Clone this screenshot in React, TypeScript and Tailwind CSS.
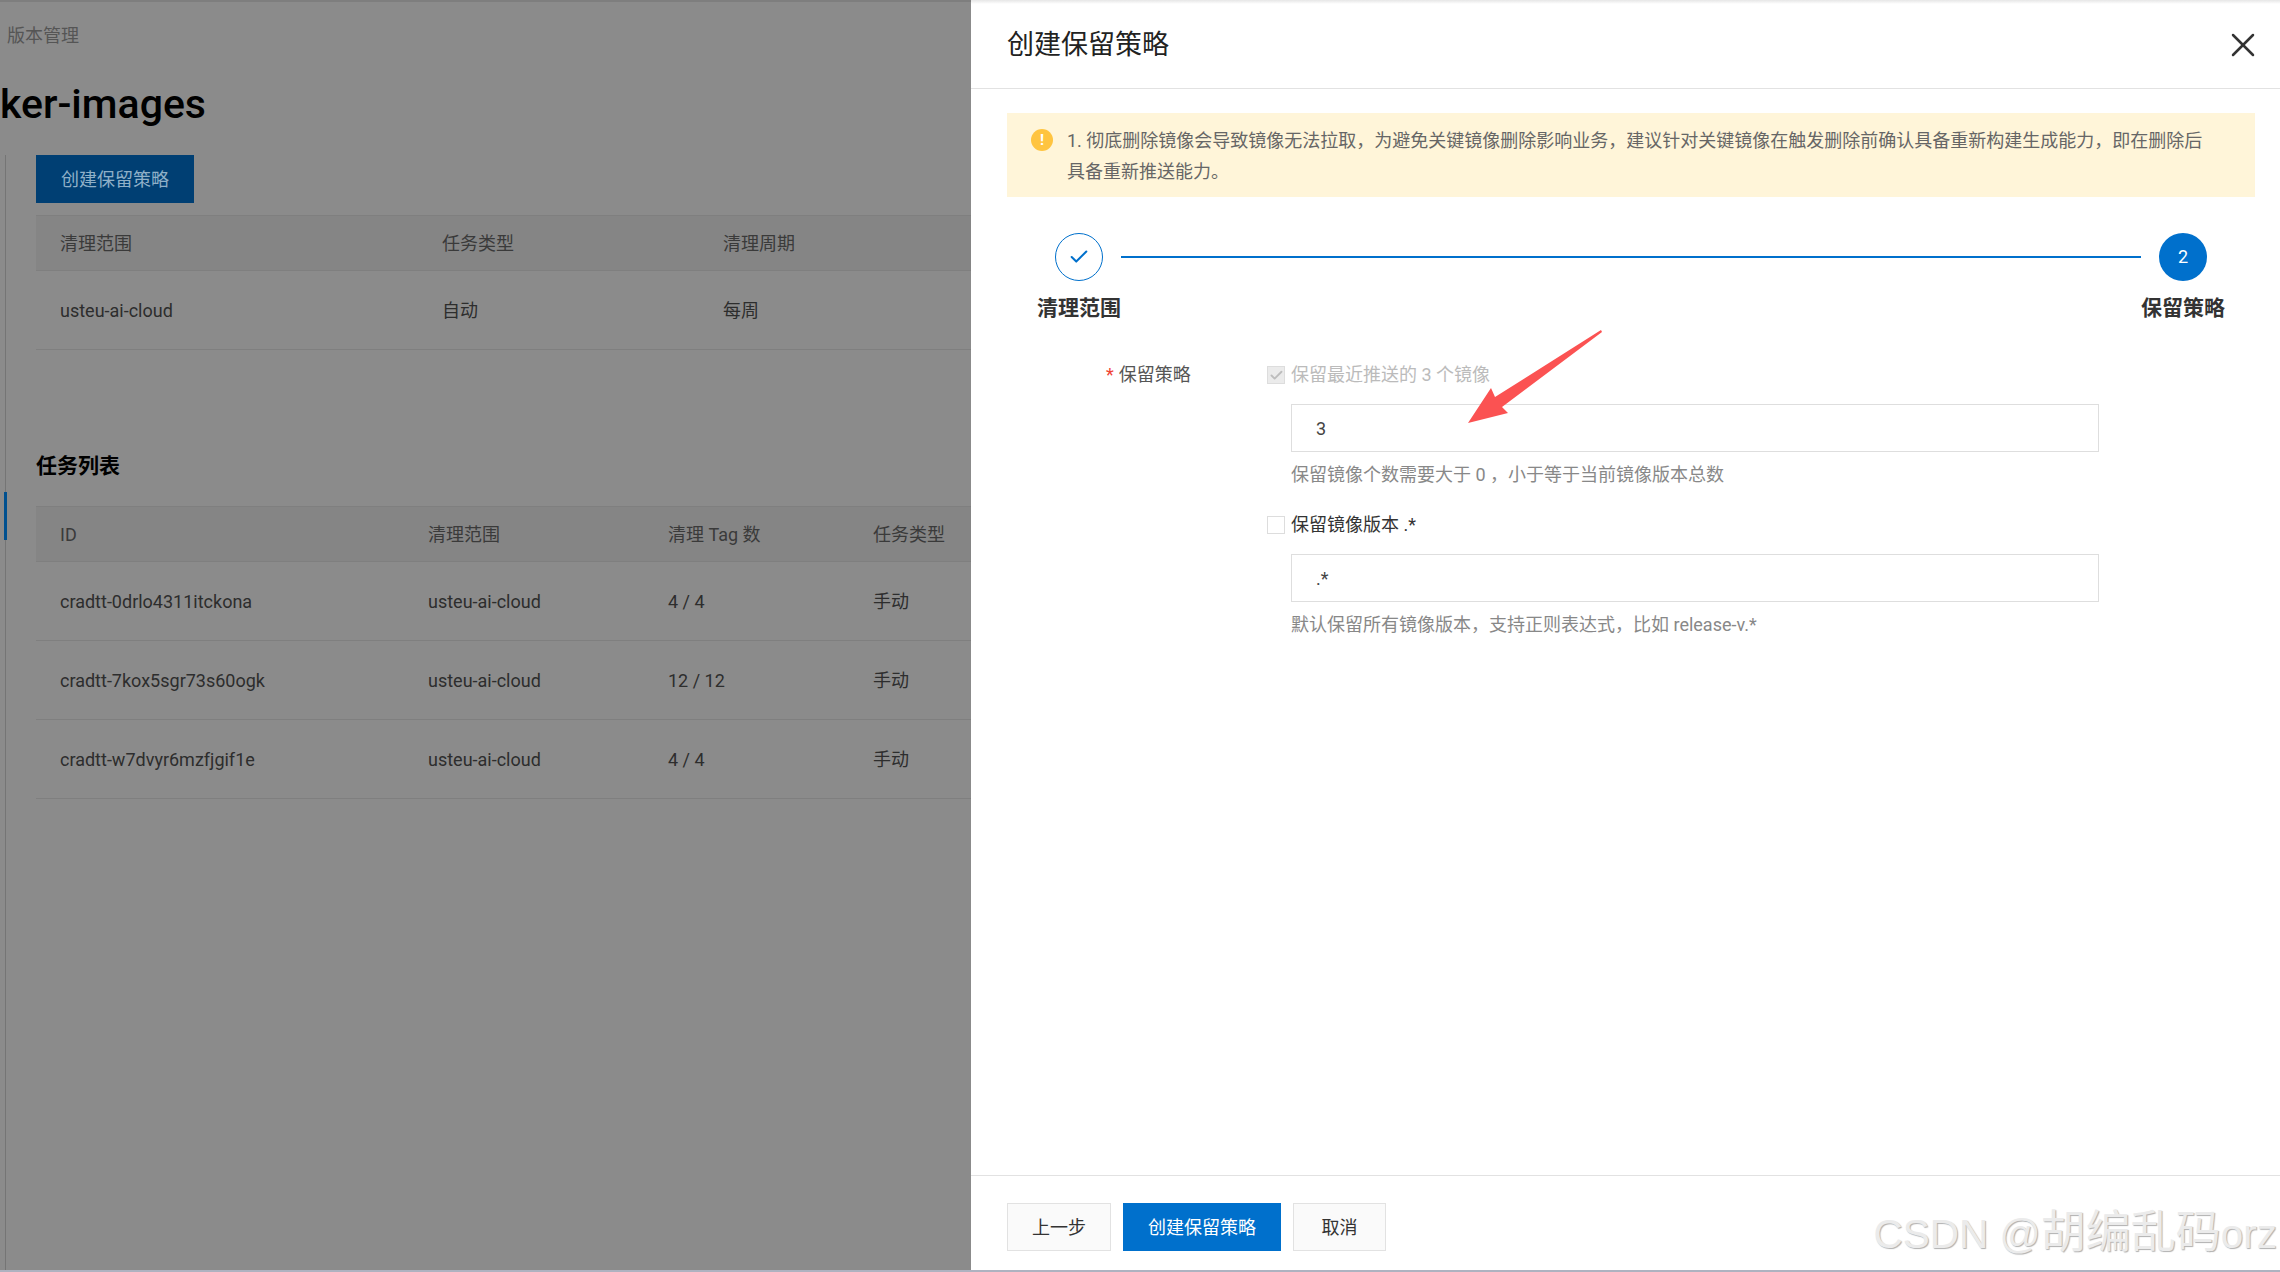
import React from 'react';
import { Check, X } from 'lucide-react';

const scopeRow = ['usteu-ai-cloud', '自动', '每周'];
const taskRows = [
  ['cradtt-0drlo4311itckona', 'usteu-ai-cloud', '4 / 4', '手动'],
  ['cradtt-7kox5sgr73s60ogk', 'usteu-ai-cloud', '12 / 12', '手动'],
  ['cradtt-w7dvyr6mzfjgif1e', 'usteu-ai-cloud', '4 / 4', '手动'],
];

export default function App() {
  return (
    <div className="relative flex h-[1272px] w-[2280px] flex-col overflow-hidden bg-white font-['Roboto','Noto_Sans_CJK_SC',sans-serif] text-[18px] leading-[24px]">
      <div className="flex min-h-0 flex-1">
        {/* Dimmed page behind the drawer */}
        <div className="flex h-full w-[971px] shrink-0 flex-col overflow-hidden bg-[#8b8b8b]">
          <div className="h-[2px] bg-[#7e7e7e]"></div>
          <div className="mt-[22px] pl-[7px] text-[#555555]">版本管理</div>
          <h1 className="mt-[28px] h-[56px] text-[41px] font-medium leading-[56px] text-black">ker-images</h1>
          <div className="ml-[5px] mt-[23px] flex-1 border-l border-[#757575] pl-[30px]">
            <button className="h-[48px] w-[158px] bg-[#003f73] pt-[2px] text-[#8fb0c8]">创建保留策略</button>

            <div className="mt-[12px] grid h-[56px] grid-cols-[382px_281px_1fr] items-center border-y border-[#7f7f7f] bg-[#858585] pl-[24px] pt-[2px] text-[#3a3a3a]">
              <span>清理范围</span>
              <span>任务类型</span>
              <span>清理周期</span>
            </div>
            <div className="grid h-[79px] grid-cols-[382px_281px_1fr] items-center border-b border-[#7f7f7f] pl-[24px] pt-[2px] text-[#2d2d2d]">
              {scopeRow.map((cell) => (
                <span key={cell}>{cell}</span>
              ))}
            </div>

            <h2 className="mt-[101px] text-[21px] font-bold leading-[30px] text-black">任务列表</h2>

            <div className="mt-[25px] grid h-[56px] grid-cols-[368px_240px_205px_1fr] items-center border-y border-[#7f7f7f] bg-[#858585] pl-[24px] pt-[2px] text-[#3a3a3a]">
              <span>ID</span>
              <span>清理范围</span>
              <span>清理 Tag 数</span>
              <span>任务类型</span>
            </div>
            {taskRows.map((row) => (
              <div key={row[0]} className="grid h-[79px] grid-cols-[368px_240px_205px_1fr] items-center border-b border-[#7f7f7f] pl-[24px] pt-[2px] text-[#2d2d2d]">
                {row.map((cell, i) => (
                  <span key={i}>{cell}</span>
                ))}
              </div>
            ))}
          </div>
        </div>

        {/* Drawer */}
        <div className="flex h-full flex-1 flex-col bg-white text-[#333333]">
          <div className="h-[4px] bg-gradient-to-b from-[#e6e6e6] to-white"></div>
          <div className="flex h-[85px] items-center justify-between border-b border-[#e2e2e2] pb-[2px] pl-[36px] pr-[17px]">
            <h3 className="text-[27px] font-normal leading-[40px] text-[#222222]">创建保留策略</h3>
            <X size={40} strokeWidth={1.5} className="text-[#333333]" />
          </div>

          <div className="flex-1 pl-[36px] pr-[25px] pt-[24px]">
            <div className="flex h-[84px] bg-[#fff5d9] pl-[24px] pr-[38px] pt-[13px] leading-[30.5px] text-[#666666]">
              <div className="mr-[14px] mt-[3px] flex h-[22px] w-[22px] shrink-0 items-center justify-center rounded-full bg-[#ffc440] text-[15px] font-bold leading-none text-white">!</div>
              <p>1. 彻底删除镜像会导致镜像无法拉取，为避免关键镜像删除影响业务，建议针对关键镜像在触发删除前确认具备重新构建生成能力，即在删除后具备重新推送能力。</p>
            </div>

            <div className="mt-[36px] flex px-[30px]">
              <div className="flex w-[84px] shrink-0 flex-col items-center">
                <div className="flex h-[48px] w-[48px] items-center justify-center rounded-full border border-[#0070cc] text-[#0070cc]">
                  <Check size={22} strokeWidth={2.2} />
                </div>
                <div className="mt-[12px] whitespace-nowrap text-[21px] font-bold leading-[30px] text-[#333333]">清理范围</div>
              </div>
              <div className="mt-[23px] h-[2px] flex-1 bg-[#0070cc]"></div>
              <div className="flex w-[84px] shrink-0 flex-col items-center">
                <div className="flex h-[48px] w-[48px] items-center justify-center rounded-full bg-[#0070cc] text-white">2</div>
                <div className="mt-[12px] whitespace-nowrap text-[21px] font-bold leading-[30px] text-[#333333]">保留策略</div>
              </div>
            </div>

            <div className="ml-[99px] mt-[40px] flex">
              <div className="w-[161px] shrink-0 text-[#555555]">
                <span className="mr-[5px] text-[#f04134]">*</span>保留策略
              </div>
              <div className="flex-1">
                <label className="flex items-center gap-[6px] text-[#bbbbbb]">
                  <span className="flex h-[18px] w-[18px] items-center justify-center border border-[#dddddd] bg-[#ebebeb] text-[#bdbdbd]">
                    <Check size={15} strokeWidth={3} />
                  </span>
                  保留最近推送的 3 个镜像
                </label>
                <div className="ml-[24px] mt-[17px] flex h-[48px] w-[808px] items-center border-[1.5px] border-[#dedede] px-[24px] pt-[2px] text-[#444444]">3</div>
                <div className="ml-[24px] mt-[11px] text-[#888888]">保留镜像个数需要大于 0 ，小于等于当前镜像版本总数</div>

                <label className="mt-[26px] flex items-center gap-[6px] text-[#333333]">
                  <span className="h-[18px] w-[18px] border border-[#dddddd] bg-white"></span>
                  保留镜像版本 .*
                </label>
                <div className="ml-[24px] mt-[17px] flex h-[48px] w-[808px] items-center border-[1.5px] border-[#dedede] px-[24px] pt-[2px] text-[#444444]">.*</div>
                <div className="ml-[24px] mt-[11px] text-[#888888]">默认保留所有镜像版本，支持正则表达式，比如 release-v.*</div>
              </div>
            </div>
          </div>

          <div className="flex h-[95px] gap-[12px] border-t border-[#e2e2e2] pl-[36px] pt-[27px]">
            <button className="h-[48px] w-[104px] border-[1.5px] border-[#e2e2e2] bg-[#fafafa] pt-[2px] text-[#333333]">上一步</button>
            <button className="h-[48px] w-[158px] bg-[#0070cc] pt-[2px] text-white">创建保留策略</button>
            <button className="h-[48px] w-[93px] border-[1.5px] border-[#e2e2e2] bg-[#fafafa] pt-[2px] text-[#333333]">取消</button>
          </div>
        </div>
      </div>
      <div className="h-[2px] shrink-0 bg-[#aeb2c0]"></div>

      {/* blue tick on the dimmed side nav */}
      <div className="absolute left-[4px] top-[492px] h-[48px] w-[3px] bg-[#00508f]"></div>

      {/* Red annotation arrow */}
      <svg className="absolute left-[1460px] top-[325px]" width="150" height="105" viewBox="1460 325 150 105">
        <path d="M1601 330 L1602 332 L1502 407 L1508 413 L1468 423 L1491 388 L1495 397 Z" fill="#fb5252" />
      </svg>

      {/* Watermark */}
      <div className="absolute bottom-[10px] right-[3px] flex items-baseline whitespace-nowrap font-['Liberation_Sans','Noto_Sans_CJK_SC',sans-serif] text-[40.5px] leading-[56px] text-[#ebebeb] [text-shadow:1px_1px_1px_#b0b0b0]">
        <span>CSDN @</span>
        <span className="text-[45px]">胡编乱码</span>
        <span>orz</span>
      </div>
    </div>
  );
}
